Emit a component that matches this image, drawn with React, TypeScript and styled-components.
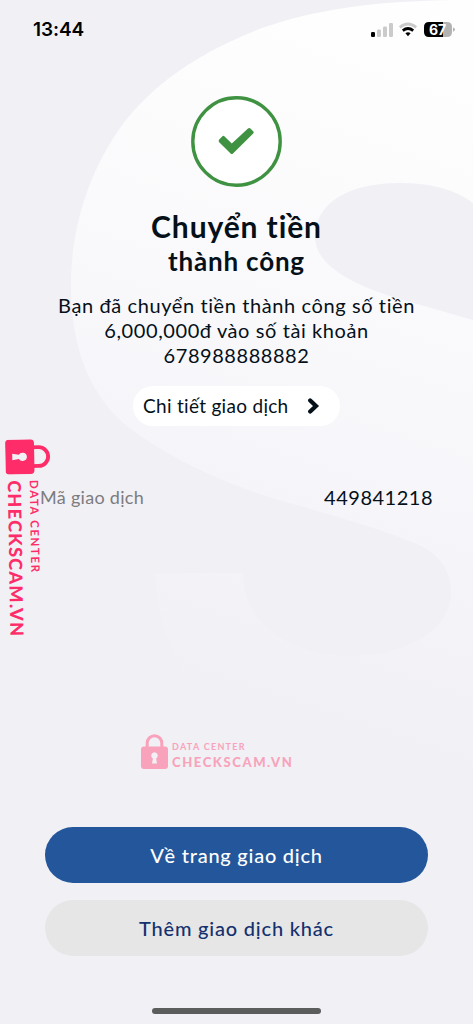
import React from "react";
import styled, { createGlobalStyle } from "styled-components";

const Global = createGlobalStyle`
  * { box-sizing: border-box; }
  body { margin: 0; background: #f1f0f5; }
`;

const Screen = styled.main`
  position: relative;
  display: flex;
  flex-direction: column;
  align-items: center;
  width: 473px;
  height: 1024px;
  overflow: hidden;
  isolation: isolate;
  color: #051019;
  font-family: Lato, "Open Sans", sans-serif;
`;

const Backdrop = styled.svg`
  position: absolute;
  inset: 0;
  z-index: -1;
`;

const StatusBar = styled.header`
  display: flex;
  align-items: center;
  justify-content: space-between;
  width: 100%;
  height: 58px;
  padding: 0 18px 0 33px;
`;

const Time = styled.time`
  padding-top: 1px;
  font: 600 19px/24px Inter, sans-serif;
  letter-spacing: -0.1px;
  color: #000;
`;

const Medallion = styled.svg`
  display: block;
  flex: none;
  margin-top: 38px;
`;

const Title = styled.h1`
  margin: 20px 0 0;
  text-align: center;
  white-space: nowrap;
`;

const TitleLine = styled.span<{ $size: number; $height: number; $spacing: number }>`
  display: block;
  font-size: ${(p) => p.$size}px;
  line-height: ${(p) => p.$height}px;
  letter-spacing: ${(p) => p.$spacing}px;
  font-weight: 700;
`;

const Message = styled.p`
  margin: 15px 0 0;
  text-align: center;
  white-space: nowrap;
`;

const MessageLine = styled.span<{ $spacing: number }>`
  display: block;
  font-size: 20px;
  line-height: 25px;
  letter-spacing: ${(p) => p.$spacing}px;
`;

const DetailButton = styled.button`
  display: flex;
  align-items: center;
  justify-content: space-between;
  width: 207px;
  height: 40px;
  margin: 18px 0 0;
  padding: 0 20px 0 10px;
  border: 0;
  border-radius: 20px;
  background: #fff;
  color: inherit;
  font: 400 19px/24px Lato, sans-serif;
  letter-spacing: 0.3px;
  white-space: nowrap;
`;

const InfoRow = styled.dl`
  display: flex;
  align-items: center;
  justify-content: space-between;
  width: 100%;
  height: 30px;
  margin: 56px 0 0;
  padding: 0 40px;
`;

const InfoLabel = styled.dt`
  font-size: 18px;
  letter-spacing: 0.3px;
  color: #7c7c80;
`;

const InfoValue = styled.dd`
  margin: 0;
  font-size: 20px;
  letter-spacing: 0.5px;
`;

const Mark = styled.div<{ $color: string }>`
  display: flex;
  align-items: flex-end;
  color: ${(p) => p.$color};
  white-space: nowrap;
`;

const CenterMark = styled(Mark)`
  width: 191px;
  height: 37px;
  margin-top: 220px;
  gap: 4px;
`;

const SideMark = styled(Mark)`
  position: absolute;
  left: 50px;
  top: 439px;
  height: 45px;
  gap: 6px;
  transform-origin: 0 0;
  transform: rotate(89deg);
`;

const MarkText = styled.div<{ $drop: number }>`
  display: flex;
  flex-direction: column;
  margin-bottom: ${(p) => -p.$drop}px;
`;

const MarkCaption = styled.span<{ $size: number; $spacing: number; $height: number }>`
  font-size: ${(p) => p.$size}px;
  line-height: ${(p) => p.$height}px;
  letter-spacing: ${(p) => p.$spacing}px;
  font-weight: 700;
`;

const MarkName = styled(MarkCaption)`
  font-weight: 900;
`;

const Actions = styled.div`
  display: flex;
  flex-direction: column;
  gap: 17px;
  width: 383px;
  margin-top: 58px;
`;

const ActionButton = styled.button<{ $primary?: boolean; $spacing: number }>`
  height: 56px;
  padding: 1px 0 0;
  border: 0;
  border-radius: 28px;
  background: ${(p) => (p.$primary ? "#23569b" : "#e6e6e6")};
  color: ${(p) => (p.$primary ? "#fff" : "#14306f")};
  font: 500 20px/25px Lato, sans-serif;
  letter-spacing: ${(p) => p.$spacing}px;
`;

const HomeIndicator = styled.div`
  width: 169px;
  height: 6px;
  margin-top: 52px;
  border-radius: 3px;
  background: #5b5c5c;
`;

const Signal = () => (
  <svg width="90" height="18" viewBox="0 0 90 18">
    <rect x="6" y="12" width="4" height="5" rx="1.2" fill="#000" />
    <g fill="#cbcbcc">
      <rect x="12" y="9.5" width="4" height="7.5" rx="1.2" />
      <rect x="18" y="6.5" width="4" height="10.5" rx="1.2" />
      <rect x="24" y="3" width="4" height="14" rx="1.2" />
    </g>
    <path d="M34.8 7.4Q43 .6 51.2 7.4" fill="none" stroke="#cbcbcc" strokeWidth="2.7" />
    <path d="M37.8 10.6Q43 6.4 48.2 10.6" fill="none" stroke="#000" strokeWidth="2.7" />
    <path d="M40.4 13.3Q43 11.2 45.6 13.3L43 16.2Z" fill="#000" />
    <path d="M64 2H78V17H64Q59 17 59 12V7Q59 2 64 2Z" fill="#000" />
    <path d="M78 2H82Q87 2 87 7V12Q87 17 82 17H78Z" fill="#b3b3b4" />
    <path d="M88 7.6Q90 8 90 9.6T88 11.8Z" fill="#b3b3b4" />
    <text x="72.5" y="14.5" fill="#fff" textAnchor="middle" fontFamily="Inter, sans-serif" fontSize="14" fontWeight="700">67</text>
  </svg>
);

const Lock = ({ size }: { size: number }) => (
  <svg width={(size * 27) / 35} height={size} viewBox="0 0 27 35">
    <path d="M6.2 15V9a7.3 7.3 0 0 1 14.6 0v6" fill="none" stroke="currentColor" strokeWidth="3" />
    <path fillRule="evenodd" fill="currentColor" d="M3 12.5H24Q27 12.5 27 15.5V32Q27 35 24 35H3Q0 35 0 32V15.5Q0 12.5 3 12.5ZM13.5 18.2A3.4 3.4 0 0 0 11.9 24.5L11 29.6H16L15.1 24.5A3.4 3.4 0 0 0 13.5 18.2Z" />
  </svg>
);

export default function App() {
  return (
    <>
      <Global />
      <Screen>
        <Backdrop width="473" height="1024" viewBox="0 0 473 1024">
          <defs>
            <linearGradient id="sweep" gradientUnits="userSpaceOnUse" x1="440" y1="60" x2="225" y2="700">
              <stop offset="0" stopColor="#fefefe" />
              <stop offset="0.35" stopColor="#fafafc" />
              <stop offset="0.65" stopColor="#f6f6fa" />
              <stop offset="0.85" stopColor="#f2f2f7" />
              <stop offset="1" stopColor="#f1f0f5" />
            </linearGradient>
          </defs>
          <path
            fill="url(#sweep)"
            d="M473 0C385 0 325 7 265 27C190 55 145 92 118 131C88 175 70 230 71 290C72 350 90 400 136 433C185 467 240 490 300 506C350 520 395 534 421 546C441 556 451 572 451 593C451 630 405 656 350 656C285 656 243 620 243 573H155C160 690 260 800 380 810L473 815V320L400 299C345 283 315 262 315 237C315 205 345 183 400 183Q447 183 473 203Z"
          />
        </Backdrop>
        <StatusBar>
          <Time>13:44</Time>
          <Signal />
        </StatusBar>
        <Medallion width="91" height="91" viewBox="0 0 91 91">
          <circle cx="45.5" cy="45.5" r="43.7" fill="#fff" stroke="#3f9241" strokeWidth="3.4" />
          <path
            d="M28.2 43.4L31.2 40.4Q32.4 39.2 33.6 40.4L40.8 47.4L57 32.6Q58.2 31.5 59.4 32.6L62.2 35.3Q63.4 36.4 62.2 37.6L42 57.4Q40.8 58.5 39.6 57.4L28.2 46.2Q27 44.8 28.2 43.4Z"
            fill="#3f9241"
          />
        </Medallion>
        <Title>
          <TitleLine $size={30} $height={38} $spacing={0.9}>Chuyển tiền</TitleLine>
          <TitleLine $size={26} $height={33} $spacing={0.8}>thành công</TitleLine>
        </Title>
        <Message>
          <MessageLine $spacing={0.6}>Bạn đã chuyển tiền thành công số tiền</MessageLine>
          <MessageLine $spacing={0.59}>6,000,000đ vào số tài khoản</MessageLine>
          <MessageLine $spacing={0.55}>678988888882</MessageLine>
        </Message>
        <DetailButton>
          Chi tiết giao dịch
          <svg width="12" height="16" viewBox="0 0 12 16">
            <path d="M2.2 2.5L8 8L2.2 13.5" fill="none" stroke="#051019" strokeWidth="4.2" strokeLinecap="round" />
          </svg>
        </DetailButton>
        <InfoRow>
          <InfoLabel>Mã giao dịch</InfoLabel>
          <InfoValue>449841218</InfoValue>
        </InfoRow>
        <CenterMark $color="#f8a3bb">
          <Lock size={35} />
          <MarkText $drop={1}>
            <MarkCaption $size={9} $height={15} $spacing={1.3}>DATA CENTER</MarkCaption>
            <MarkName $size={13} $height={16} $spacing={1.6}>CHECKSCAM.VN</MarkName>
          </MarkText>
        </CenterMark>
        <Actions>
          <ActionButton $primary $spacing={0.75}>Về trang giao dịch</ActionButton>
          <ActionButton $spacing={0.8}>Thêm giao dịch khác</ActionButton>
        </Actions>
        <HomeIndicator />
        <SideMark $color="#fe2c68">
          <Lock size={45} />
          <MarkText $drop={2}>
            <MarkCaption $size={11.5} $height={17} $spacing={1.6}>DATA CENTER</MarkCaption>
            <MarkName $size={18} $height={22} $spacing={1.3}>CHECKSCAM.VN</MarkName>
          </MarkText>
        </SideMark>
      </Screen>
    </>
  );
}
